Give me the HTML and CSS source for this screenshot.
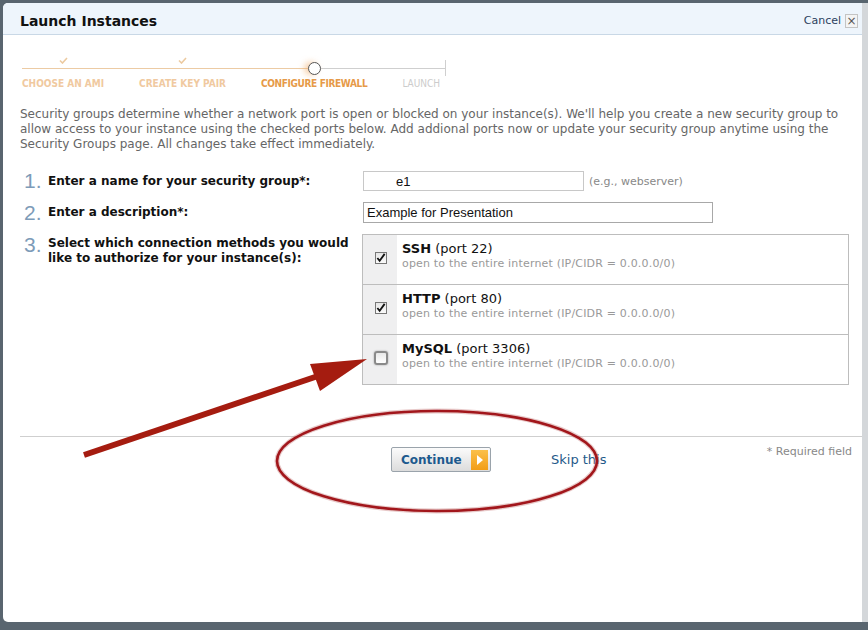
FILE: index.html
```html
<!DOCTYPE html>
<html lang="en">
<head>
    <meta charset="UTF-8">
    <title>Launch Instances</title>
    <link rel="stylesheet" href="styles.css">
</head>
<body>
    <div class="dialog">
        <div class="dialog-header">
            <h1>Launch Instances</h1>
            <a class="cancel" href="#">Cancel <span class="close-box">&times;</span></a>
        </div>

        <div class="wizard">
            <ol class="steps">
                <li class="step done">
                    <span class="marker"><svg class="tick" width="9" height="7" viewBox="0 0 9 7"><path d="M1 3.5 L3.5 6 L8 1" fill="none" stroke="#eccaa0" stroke-width="1.6"/></svg></span>
                    <span class="step-label">CHOOSE AN AMI</span>
                </li>
                <li class="step done">
                    <span class="marker"><svg class="tick" width="9" height="7" viewBox="0 0 9 7"><path d="M1 3.5 L3.5 6 L8 1" fill="none" stroke="#eccaa0" stroke-width="1.6"/></svg></span>
                    <span class="step-label">CREATE KEY PAIR</span>
                </li>
                <li class="step current">
                    <span class="marker"><span class="dot"></span></span>
                    <span class="step-label">CONFIGURE FIREWALL</span>
                </li>
                <li class="step todo">
                    <span class="marker"></span>
                    <span class="step-label">LAUNCH</span>
                </li>
            </ol>
        </div>

        <p class="intro">Security groups determine whether a network port is open or blocked on your instance(s). We'll help you create a new security group to allow access to your instance using the checked ports below. Add addional ports now or update your security group anytime using the Security Groups page. All changes take effect immediately.</p>

        <div class="form">
            <div class="form-row">
                <span class="num">1.</span>
                <label for="groupName">Enter a name for your security group*:</label>
                <div class="field">
                    <input type="text" id="groupName" class="name-input" value="e1">
                    <span class="hint">(e.g., webserver)</span>
                </div>
            </div>
            <div class="form-row">
                <span class="num">2.</span>
                <label for="groupDesc">Enter a description*:</label>
                <div class="field">
                    <input type="text" id="groupDesc" class="desc-input" value="Example for Presentation">
                </div>
            </div>
            <div class="form-row top">
                <span class="num">3.</span>
                <label>Select which connection methods you would like to authorize for your instance(s):</label>
                <div class="field">
                    <div class="options">
                        <div class="option">
                            <div class="check-cell"><span class="box checked"><svg width="11" height="10" viewBox="0 0 11 10"><path d="M1.5 5 L4 8 L9.5 0.5" fill="none" stroke="#111" stroke-width="2"/></svg></span></div>
                            <div class="option-text">
                                <div class="proto"><b>SSH</b> (port 22)</div>
                                <div class="scope">open to the entire internet (IP/CIDR = 0.0.0.0/0)</div>
                            </div>
                        </div>
                        <div class="option">
                            <div class="check-cell"><span class="box checked"><svg width="11" height="10" viewBox="0 0 11 10"><path d="M1.5 5 L4 8 L9.5 0.5" fill="none" stroke="#111" stroke-width="2"/></svg></span></div>
                            <div class="option-text">
                                <div class="proto"><b>HTTP</b> (port 80)</div>
                                <div class="scope">open to the entire internet (IP/CIDR = 0.0.0.0/0)</div>
                            </div>
                        </div>
                        <div class="option">
                            <div class="check-cell"><span class="box empty"></span></div>
                            <div class="option-text">
                                <div class="proto"><b>MySQL</b> (port 3306)</div>
                                <div class="scope">open to the entire internet (IP/CIDR = 0.0.0.0/0)</div>
                            </div>
                        </div>
                    </div>
                </div>
            </div>
        </div>

        <div class="footer">
            <button type="button" class="continue">Continue <span class="go"><svg width="8" height="12" viewBox="0 0 8 12"><path d="M1 1 L7 6 L1 11 Z" fill="#fff"/></svg></span></button>
            <a class="skip" href="#">Skip this</a>
            <span class="required">* Required field</span>
        </div>

        <!-- annotation drawn over the screenshot -->
        <svg class="markup" width="868" height="630" viewBox="0 0 868 630">
            <defs>
                <filter id="soft" x="-10%" y="-10%" width="120%" height="120%">
                    <feGaussianBlur stdDeviation="0.7"/>
                </filter>
            </defs>
            <ellipse cx="437" cy="461" rx="160" ry="50" fill="none" stroke="#c88" stroke-width="5" opacity="0.45" filter="url(#soft)"/>
            <ellipse cx="437" cy="461" rx="160" ry="50" fill="none" stroke="#a2161a" stroke-width="2.6" filter="url(#soft)"/>
            <line x1="84" y1="455" x2="318" y2="376" stroke="#a51c10" stroke-width="6"/>
            <polygon points="367,359 310,364 320,391" fill="#a51c10"/>
        </svg>
    </div>
</body>
</html>
```

FILE: styles.css
```css
body {
    margin: 0;
    background: #59656f;
    font-family: "DejaVu Sans", Verdana, sans-serif;
}
.dialog {
    position: relative;
    margin: 3px 0 0 3px;
    height: 619px;
    background: white;
    border-right: 6px solid #d4d7da;
    border-radius: 5px 0 0 5px;
}
.markup {
    position: absolute;
    top: -3px;
    left: -3px;
    pointer-events: none;
}
.dialog-header {
    box-sizing: border-box;
    height: 32px;
    display: flex;
    align-items: center;
    justify-content: space-between;
    padding: 4px 4px 0 17px;
    background: #eef5fc;
    border-bottom: 1px solid #c9d8e6;
    border-radius: 5px 0 0 0;
}
.dialog-header h1 {
    margin: 0;
    font-size: 14px;
    font-weight: bold;
    color: #111;
}
.cancel {
    display: flex;
    align-items: center;
    gap: 4px;
    font-size: 11px;
    color: #2b3f5c;
    text-decoration: none;
}
.close-box {
    display: inline-block;
    width: 11px;
    height: 12px;
    line-height: 12px;
    text-align: center;
    border: 1px solid #c4c4c4;
    background: #f4f4f4;
    color: #555;
    font-size: 12px;
}

/* wizard progress */
.wizard {
    padding: 20px 0 0 19px;
}
.steps {
    position: relative;
    display: flex;
    gap: 35px;
    width: 424px;
    margin: 0;
    padding: 0;
    list-style: none;
}
.steps::before {
    content: "";
    position: absolute;
    left: 0;
    right: 0;
    top: 13px;
    height: 1px;
    background: linear-gradient(to right, #eccba4 0, #eccba4 292px, #cfcfcf 292px);
}
.steps::after {
    content: "";
    position: absolute;
    right: 0;
    top: 5px;
    width: 1px;
    height: 16px;
    background: #cfcfcf;
}
.step {
    display: flex;
    flex-direction: column;
    align-items: center;
}
.marker {
    position: relative;
    height: 20px;
    display: flex;
    justify-content: center;
}
.tick {
    margin-top: 2px;
}
.dot {
    width: 11px;
    height: 11px;
    margin-top: 7px;
    border: 1.3px solid #555;
    border-radius: 50%;
    background: white;
    box-shadow: -4px 0 6px rgba(240, 170, 100, 0.55);
}
.step-label {
    margin-top: 3px;
    font-family: "DejaVu Sans Condensed", "DejaVu Sans", sans-serif;
    font-size: 10px;
    font-weight: bold;
    line-height: 12px;
    white-space: nowrap;
}
.done .step-label { color: #f0c9a0; }
.current .step-label { color: #e69a48; letter-spacing: -0.35px; }
.todo .step-label { color: #cccccc; font-weight: normal; }

.intro {
    margin: 17px 6px 0 17px;
    font-size: 12px;
    line-height: 15px;
    color: #666;
}

/* form */
.form {
    margin: 19px 0 0 17px;
}
.form-row {
    display: grid;
    grid-template-columns: 28px 315px auto;
    align-items: center;
    margin-bottom: 11px;
}
.form-row.top {
    align-items: start;
    margin-bottom: 0;
}
.num {
    padding-left: 4px;
    font-family: "Liberation Sans", Arial, sans-serif;
    font-size: 21px;
    line-height: 20px;
    color: #7d9bb8;
}
.form-row.top .num {
    padding-top: 1px;
}
.form-row label {
    font-size: 12px;
    font-weight: bold;
    color: #111;
    line-height: 15px;
}
.form-row.top label {
    padding-top: 2px;
    padding-right: 10px;
}
.field {
    display: flex;
    align-items: center;
    gap: 5px;
}
input {
    box-sizing: border-box;
    margin: 0;
    padding: 1px 3px;
    border: 1px solid #c8c8c8;
    font-family: "Liberation Sans", Arial, sans-serif;
    font-size: 13px;
    color: #111;
}
.name-input {
    width: 221px;
    height: 20px;
    padding-left: 32px;
}
.desc-input {
    width: 350px;
    height: 21px;
    border-color: #a8a8a8;
}
.hint {
    font-size: 11px;
    color: #888;
}
.options {
    width: 485px;
    margin-left: -1px;
    border: 1px solid #bdbdbd;
}
.option {
    display: flex;
    height: 49px;
    border-top: 1px solid #bdbdbd;
}
.option:first-child {
    border-top: none;
}
.check-cell {
    width: 34px;
    display: flex;
    align-items: center;
    justify-content: center;
    background: #efeff0;
}
.box {
    box-sizing: border-box;
    display: flex;
    align-items: center;
    justify-content: center;
    margin-left: 1px;
    margin-top: -3px;
}
.box.checked {
    width: 12px;
    height: 12px;
    border: 1px solid #777;
    background: linear-gradient(#e6e6e6, #fafafa);
}
.box.empty {
    width: 14px;
    height: 14px;
    border: 2px solid #8a8a8a;
    border-radius: 3px;
    background: linear-gradient(#e8e8e8, #fff);
    box-shadow: 0 0 2px rgba(0, 0, 0, 0.35);
}
.option-text {
    padding: 6px 0 0 5px;
}
.proto {
    font-size: 13px;
    line-height: 16px;
    color: #111;
}
.scope {
    font-size: 11px;
    line-height: 13px;
    letter-spacing: 0.18px;
    color: #999;
}

/* footer */
.footer {
    display: flex;
    align-items: flex-start;
    margin: 51px 0 0 17px;
    padding: 10px 10px 0 371px;
    border-top: 1px solid #cfcfcf;
}
.continue {
    display: flex;
    align-items: center;
    justify-content: space-between;
    box-sizing: border-box;
    width: 100px;
    height: 25px;
    padding: 0 2px 0 9px;
    border: 1px solid #9aa3ab;
    border-radius: 2px;
    background: linear-gradient(#fbfbfb, #dcdcdc);
    font-family: "DejaVu Sans", Verdana, sans-serif;
    font-size: 12px;
    font-weight: bold;
    color: #1d5a8e;
}
.go {
    display: flex;
    align-items: center;
    justify-content: center;
    width: 17px;
    height: 20px;
    background: linear-gradient(#fbc04a, #f29d16);
}
.skip {
    margin: 5px 0 0 60px;
    font-size: 13px;
    color: #1f5a8a;
    text-decoration: none;
}
.required {
    margin-left: auto;
    margin-top: -2px;
    font-size: 11px;
    color: #888;
}
```
